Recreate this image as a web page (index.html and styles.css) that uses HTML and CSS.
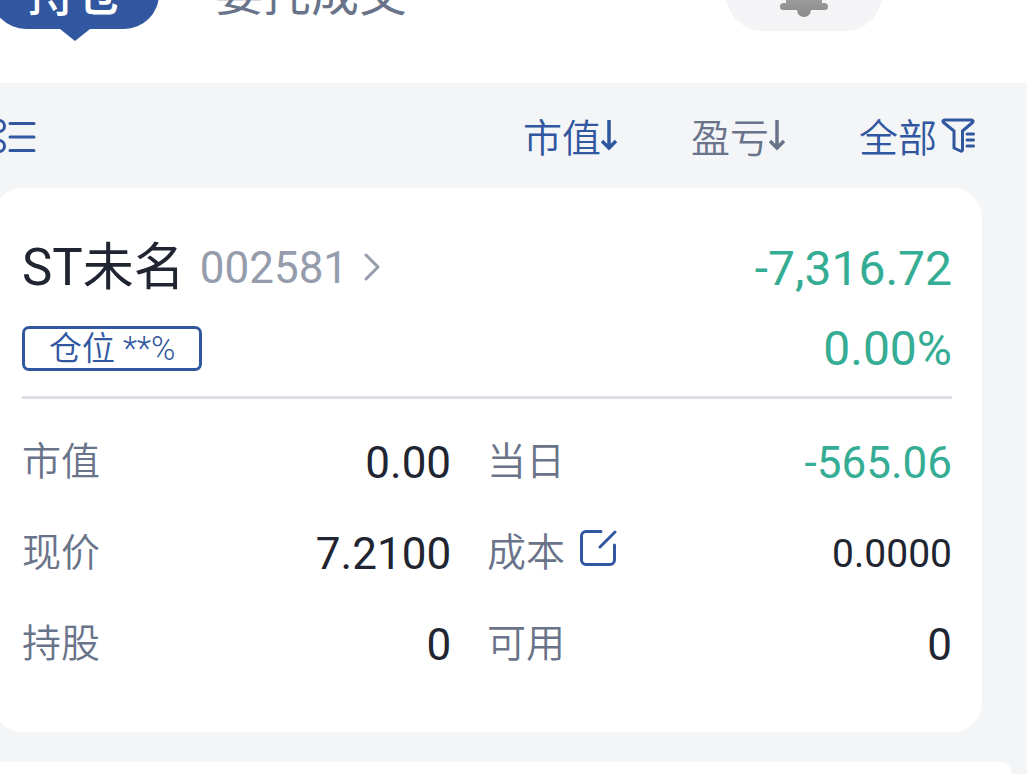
FILE: index.html
```
<!DOCTYPE html>
<html lang="zh-CN">
<head>
  <meta charset="UTF-8" />
  <meta name="viewport" content="width=device-width, initial-scale=1.0"/>
  <title>持仓</title>
  <link rel="stylesheet" href="styles.css">
</head>
<body>

  <header class="topbar">
    <nav class="tabs">
      <button type="button" class="tab active">持仓</button>
      <button type="button" class="tab">委托成交</button>
    </nav>
    <button type="button" class="bell" aria-label="消息提醒">
      <svg width="48" height="46" viewBox="0 0 48 46">
        <defs>
          <linearGradient id="bellFill" x1="0" y1="0" x2="0" y2="1">
            <stop offset="0" stop-color="#b5b5b5"/>
            <stop offset="1" stop-color="#8a8a8a"/>
          </linearGradient>
        </defs>
        <path fill="url(#bellFill)" d="M24 0C13 0 6 7 6 16v16H3.500a3.500 3.500 0 0 0 0 7H17a7 7 0 0 0 14 0h13.500a3.500 3.500 0 0 0 0-7H42V16C42 7 35 0 24 0z"/>
      </svg>
    </button>
  </header>

  <div class="toolbar">
    <button type="button" class="view-btn" aria-label="列表">
      <svg width="46" height="38" viewBox="0 0 46 38" fill="none" stroke="#30579f" stroke-width="3" stroke-linecap="round">
        <circle cx="9" cy="9" r="5.500"/>
        <circle cx="9" cy="29" r="5.500"/>
        <path d="M20 6.500h24M20 20h24M20 33.500h24"/>
      </svg>
    </button>
    <div class="filters">
      <button type="button" class="filter active">市值<svg width="16" height="32" viewBox="0 0 16 32" fill="none" stroke="currentColor" stroke-width="3.500"><path d="M8 0v28M1 21l7 7 7-7"/></svg></button>
      <button type="button" class="filter">盈亏<svg width="16" height="32" viewBox="0 0 16 32" fill="none" stroke="currentColor" stroke-width="3.500"><path d="M8 0v28M1 21l7 7 7-7"/></svg></button>
      <button type="button" class="filter active">全部<svg class="funnel" width="34" height="36" viewBox="0 0 34 36" fill="none" stroke="currentColor" stroke-width="3" stroke-linecap="round" stroke-linejoin="round"><path d="M3.500 2h27c1.500 0 2 1.500 1 2.500L21.500 13v18.500c0 1.500-1 2-2 1.500L13 30V13L2.500 4.500C1.500 3.500 2 2 3.500 2zM26 16h6.500M26 22h6.500M26 28h6.500"/></svg></button>
    </div>
  </div>

  <main class="list">
    <section class="card">
      <div class="row">
        <a class="stock" href="#">
          <span class="name">ST未名</span>
          <span class="code">002581</span>
          <svg width="18" height="30" viewBox="0 0 18 30" fill="none" stroke="#959cac" stroke-width="3" stroke-linecap="round" stroke-linejoin="round"><path d="M3 2l12 12L3 26"/></svg>
        </a>
        <span class="profit">-7,316.72</span>
      </div>
      <div class="row">
        <span class="tag">仓位 **%</span>
        <span class="profit">0.00%</span>
      </div>
      <hr class="divider">
      <dl class="details">
        <div class="item"><dt>市值</dt><dd>0.00</dd></div>
        <div class="item"><dt>当日</dt><dd class="down">-565.06</dd></div>
        <div class="item"><dt>现价</dt><dd>7.2100</dd></div>
        <div class="item">
          <dt>成本
            <button type="button" class="edit" aria-label="修改成本">
              <svg width="38" height="50" viewBox="0 0 38 50" fill="none" stroke="#30579f" stroke-width="3" stroke-linecap="round"><path d="M22 2.500H7A4.500 4.500 0 0 0 2.500 7v24A4.500 4.500 0 0 0 7 35.500h24a4.500 4.500 0 0 0 4.500-4.500V16M21 18L36 3"/></svg>
            </button>
          </dt>
          <dd class="small">0.0000</dd>
        </div>
        <div class="item"><dt>持股</dt><dd>0</dd></div>
        <div class="item"><dt>可用</dt><dd>0</dd></div>
      </dl>
    </section>
    <section class="next-card"></section>
  </main>

</body>
</html>
```

FILE: styles.css
```
* {
  box-sizing: border-box;
}

body {
  margin: 0;
  height: 100vh;
  display: flex;
  flex-direction: column;
  overflow: hidden;
  background: #f3f5f7;
  color: #202531;
  font-family: Roboto, "Noto Sans CJK SC", sans-serif;
}

button {
  padding: 0;
  border: none;
  background: none;
  color: inherit;
  font: inherit;
  cursor: pointer;
}

svg {
  display: block;
  flex: none;
}

/* Top bar, scrolled partly out of view */
.topbar {
  display: flex;
  align-items: center;
  justify-content: space-between;
  margin-top: -43px;
  padding: 0 145px 52px 0;
  background: #fff;
}

.tabs {
  display: flex;
  align-items: center;
  gap: 56px;
  margin-left: -9px;
}

.tab {
  height: 70px;
  padding-top: 2px;
  color: #697389;
  font-size: 48px;
  line-height: 68px;
}

.tab.active {
  position: relative;
  padding: 2px 36px 0;
  border-radius: 35px;
  background: #30579f;
  color: #fff;
  font-weight: 500;
}

.tab.active::after {
  content: "";
  position: absolute;
  top: 100%;
  left: 50%;
  margin-left: -15px;
  border: 15px solid transparent;
  border-top: 12px solid #30579f;
  border-bottom: 0;
}

.bell {
  display: flex;
  align-items: center;
  justify-content: center;
  width: 156px;
  height: 74px;
  border-radius: 37px;
  background: #f4f4f6;
}

/* Sort and filter bar */
.toolbar {
  display: flex;
  align-items: center;
  justify-content: space-between;
  padding: 24px 52px 24px 0;
}

.view-btn {
  margin-left: -10px;
}

.filters {
  display: flex;
  gap: 74px;
}

.filter {
  display: flex;
  align-items: center;
  color: #697389;
  font-family: "Noto Sans CJK SC", sans-serif;
  font-size: 39px;
  font-weight: 350;
  line-height: 57px;
}

.filter.active {
  color: #30579f;
}

.funnel {
  margin-left: 4px;
}

/* Position card */
.list {
  flex: 1;
  display: flex;
  flex-direction: column;
  gap: 30px;
}

.card {
  margin: 0 45px 0 -7px;
  padding: 48px 30px 42px 29px;
  border-radius: 30px;
  background: #fff;
}

.row {
  display: flex;
  align-items: center;
  justify-content: space-between;
  height: 64px;
  margin-bottom: 16px;
}

.stock {
  display: flex;
  align-items: center;
  gap: 15px;
  color: inherit;
  text-decoration: none;
}

.name {
  font-size: 51px;
  line-height: 64px;
}

.code {
  color: #959cac;
  font-size: 44px;
}

.profit {
  color: #34ad94;
  font-size: 48px;
}

.tag {
  padding: 0 24px;
  border: 3px solid #30579f;
  border-radius: 7px;
  color: #30579f;
  font-size: 33px;
  font-weight: 350;
  line-height: 39px;
}

.divider {
  height: 3px;
  margin: 0 0 18px;
  border: none;
  background: #dddfe4;
}

.details {
  display: grid;
  grid-template-columns: 12fr 13fr;
  column-gap: 36px;
  margin: 0;
}

.item {
  display: flex;
  align-items: center;
  justify-content: space-between;
  height: 91px;
}

.item dt {
  display: flex;
  align-items: center;
  gap: 14px;
  color: #697389;
  font-size: 39px;
  font-weight: 350;
  line-height: 57px;
}

.item dd {
  margin: 0;
  font-size: 44px;
  line-height: 48px;
}

.item .down {
  color: #34ad94;
}

.item .small {
  font-size: 39px;
}

.next-card {
  flex: 1;
  margin: 0 15px 0 -10px;
  border-radius: 12px 12px 0 0;
  background: #fff;
}
```
